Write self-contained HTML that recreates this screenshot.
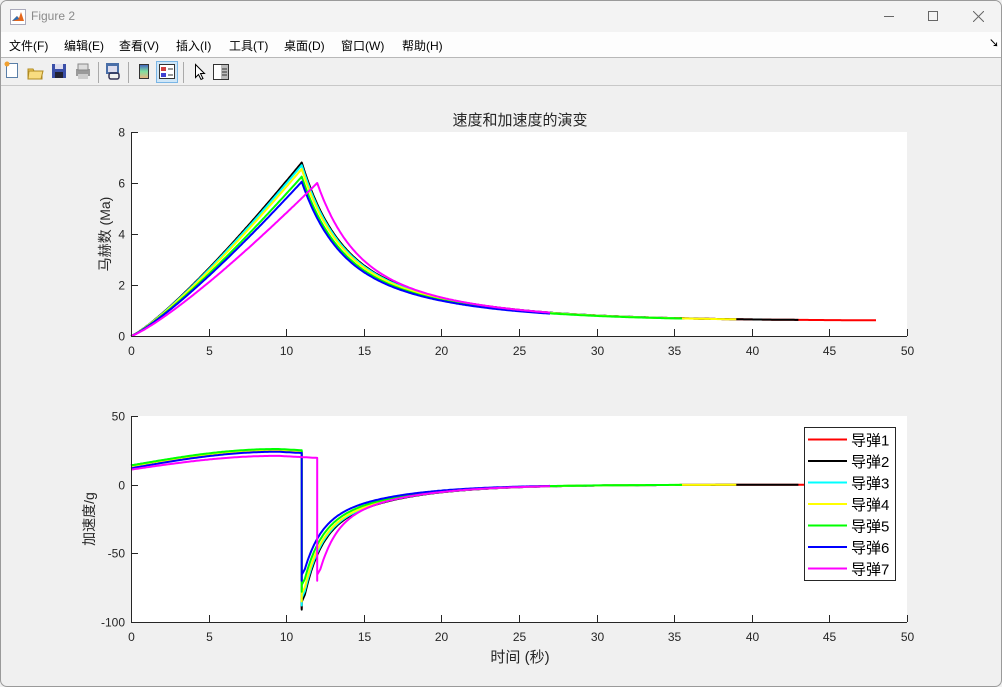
<!DOCTYPE html>
<html><head><meta charset="utf-8"><style>
*{margin:0;padding:0;box-sizing:border-box}
body{width:1002px;height:687px;overflow:hidden;background:#f0f0f0;font-family:"Liberation Sans","Noto Sans CJK SC",sans-serif;position:relative}
.win{position:absolute;left:0;top:0;width:1002px;height:687px;border:1px solid #9a9a9a;border-radius:7px;overflow:hidden;background:#f0f0f0}
.title{position:absolute;left:0;top:0;width:100%;height:31px;background:#f3f3f3;font-size:12px;color:#8a8a8a}
.menu{position:absolute;left:0;top:31px;width:100%;height:26px;background:#fdfdfd;border-bottom:1px solid #b8b8b8;font-size:12px;color:#000}
.menu span{position:absolute;top:5px;font-family:"Liberation Sans","Noto Sans CJK SC",sans-serif}
.tool{position:absolute;left:0;top:58px;width:100%;height:27px;background:#f0f0f0;border-bottom:1px solid #c8c8c8}
svg text{font-family:"Liberation Sans","Noto Sans CJK SC",sans-serif}
</style></head><body><div class="win">
<div class="title">
<svg style="position:absolute;left:9px;top:8px" width="16" height="16" viewBox="0 0 16 16"><rect x="0.5" y="0.5" width="15" height="15" fill="#fff" stroke="#aab"/><path d="M2 12 L7 7 L9 9 L11 3 L14 12 Z" fill="#e4661c"/><path d="M2 12 L7 7 L9 10 Z" fill="#2d6fb5"/></svg>
<span style="position:absolute;left:30px;top:8px">Figure 2</span>
<div style="position:absolute;left:883px;top:15px;width:10px;height:1px;background:#666"></div>
<div style="position:absolute;left:927px;top:10px;width:10px;height:10px;border:1px solid #666"></div>
<svg style="position:absolute;left:972px;top:10px" width="11" height="11"><path d="M0 0L11 11M11 0L0 11" stroke="#666" stroke-width="1"/></svg>
</div>
<div class="menu">
<span style="left:8px">文件(F)</span><span style="left:63px">编辑(E)</span><span style="left:118px">查看(V)</span><span style="left:175px">插入(I)</span><span style="left:228px">工具(T)</span><span style="left:283px">桌面(D)</span><span style="left:340px">窗口(W)</span><span style="left:401px">帮助(H)</span>
<span style="left:988px;top:3px;font-size:10px;font-weight:bold">↘</span>
</div>
<div class="tool">
<svg width="240" height="27">
<rect x="5.5" y="4.5" width="11" height="14" fill="#fff" stroke="#5a7fa8"/><circle cx="6" cy="5" r="2.5" fill="#f0a030"/>
<path d="M27 10h5l1 2h8v8H27z" fill="#f4cf60" stroke="#b08a20"/><path d="M28 12h14l-2 8H27z" fill="#f8dc80" stroke="#b08a20"/>
<rect x="51" y="5" width="14" height="14" fill="#3a4fa8"/><rect x="54" y="5" width="8" height="5" fill="#dde"/><rect x="54" y="13" width="8" height="6" fill="#223"/>
<rect x="75" y="10" width="14" height="7" fill="#9a9a9a"/><rect x="77" y="5" width="10" height="6" fill="#ddd" stroke="#888"/><rect x="77" y="15" width="10" height="5" fill="#ccc"/>
<line x1="97.5" y1="3" x2="97.5" y2="24" stroke="#aaa"/>
<rect x="105" y="4" width="13" height="11" fill="#4a6fa8"/><rect x="107" y="7" width="9" height="6" fill="#dde"/><rect x="108" y="14" width="10" height="6" rx="2" fill="none" stroke="#335" stroke-width="1.5"/>
<line x1="127.5" y1="3" x2="127.5" y2="24" stroke="#aaa"/>
<defs><linearGradient id="g" x1="0" y1="0" x2="0" y2="1"><stop offset="0" stop-color="#4060c0"/><stop offset=".5" stop-color="#80e0a0"/><stop offset="1" stop-color="#f0b080"/></linearGradient></defs>
<rect x="138.5" y="5.5" width="9" height="14" fill="url(#g)" stroke="#333"/>
<rect x="155.5" y="2.5" width="21" height="21" fill="#cfe6f7" stroke="#7ab6e6"/><rect x="158.5" y="5.5" width="15" height="14" fill="#fff" stroke="#333"/><rect x="160" y="8" width="5" height="4" fill="#d04040"/><rect x="160" y="14" width="5" height="4" fill="#4040d0"/><line x1="167" y1="10" x2="172" y2="10" stroke="#333"/><line x1="167" y1="16" x2="172" y2="16" stroke="#333"/>
<line x1="182.5" y1="3" x2="182.5" y2="24" stroke="#aaa"/>
<path d="M194.5 5.5v13l3-3 2.5 5 2-1-2.5-5h4z" fill="#fff" stroke="#000"/>
<rect x="212.5" y="5.5" width="15" height="15" fill="#fff" stroke="#333"/><rect x="220" y="6" width="7" height="14" fill="#bbb"/><line x1="221" y1="10" x2="226" y2="10" stroke="#333"/><line x1="221" y1="13" x2="226" y2="13" stroke="#333"/><line x1="221" y1="16" x2="226" y2="16" stroke="#333"/>
</svg>
</div>
<svg id="plot" style="position:absolute;left:0;top:0" width="1002" height="687">
<rect x="130" y="131" width="776" height="204" fill="#fff"/>
<rect x="130" y="415" width="776" height="206" fill="#fff"/>
<g id="curves" fill="none" stroke-width="2" stroke-linejoin="round"></g>
<g stroke="#262626" stroke-width="1" fill="none">
<path d="M130.5 131V335.5H906"/>
<path d="M130.5 415V621.5H906"/>
</g>
<g id="ticks" stroke="#262626" stroke-width="1"></g>
<g id="labels" font-size="12" fill="#262626"></g>
<text x="519" y="124" font-size="15" fill="#262626" text-anchor="middle">速度和加速度的演变</text>
<text transform="translate(109,233) rotate(-90)" font-size="14" fill="#262626" text-anchor="middle">马赫数 (Ma)</text>
<text transform="translate(93,518) rotate(-90)" font-size="14" fill="#262626" text-anchor="middle">加速度/g</text>
<text x="519" y="661" font-size="15" fill="#262626" text-anchor="middle">时间 (秒)</text>
<g id="legend"><rect x="803.5" y="426.5" width="91" height="153" fill="#fff" stroke="#262626"/></g>
</svg>
</div>
<script>
var NS="http://www.w3.org/2000/svg";
function el(p,t,a,txt){var e=document.createElementNS(NS,t);for(var k in a)e.setAttribute(k,a[k]);if(txt!=null)e.textContent=txt;p.appendChild(e);return e}
var tk=document.getElementById('ticks'),lb=document.getElementById('labels'),cv=document.getElementById('curves'),lg=document.getElementById('legend');
function X(t){return 130+15.52*t}
for(var i=0;i<=10;i++){var x=Math.round(X(i*5))+0.5;
el(tk,'line',{x1:x,x2:x,y1:335,y2:328});el(tk,'line',{x1:x,x2:x,y1:621,y2:614});
el(lb,'text',{x:x,y:354,'text-anchor':'middle'},i*5);el(lb,'text',{x:x,y:640,'text-anchor':'middle'},i*5);}
for(var i=0;i<=4;i++){var y=Math.round(335-25.5*i*2)+0.5;el(tk,'line',{x1:130,x2:137,y1:y,y2:y});el(lb,'text',{x:124,y:y+4,'text-anchor':'end'},i*2);}
[[50,415],[0,483.7],[-50,552.3],[-100,621]].forEach(function(v){var y=Math.round(v[1])+0.5;el(tk,'line',{x1:130,x2:137,y1:y,y2:y});el(lb,'text',{x:124,y:y+4,'text-anchor':'end'},v[0]);});
function YM(m){return 335-25.5*m}
function YA(a){return 483.7-1.373*a}
function mdec(dt,P){return 0.6+(P-0.6)*(0.5*Math.exp(-dt/2.0)+0.5*Math.exp(-dt/7));}
function adec(dt,A){return A*(0.55*Math.exp(-dt/1.0)+0.45*Math.exp(-dt/4.5));}
var S=[['#ff0000',6.8,11,48,14,25,-90],['#000000',6.8,11,43,14,25,-91],['#00ffff',6.7,11,35,14,25.5,-88],['#ffff00',6.55,11,39,13.5,25,-85],['#00ff00',6.25,11,35.5,14,26,-78],['#0000ff',6.05,11,27,12,24,-70],['#ff00ff',6.0,12,27,11,21,-70]];
[0,1,2,3,4,5,6].forEach(function(i){var s=S[i],c=s[0],P=s[1],tb=s[2],te=s[3];
var d='',d2='';
for(var t=0;t<=te+1e-9;t+=0.1){var m,a;
if(t<=tb+1e-9){m=P*Math.pow(t/tb,1.2);}else{m=mdec(t-tb,P);}
if(t<=tb+1e-9){var u=Math.min(t/9.5,1);a=s[4]+(s[5]-s[4])*Math.sin(Math.PI/2*u);if(t>9.5)a=s[5]-(t-9.5)*0.6;}else{a=adec(t-tb,s[6]);}
if(t>tb&&d2.indexOf('V')<0){d2+='L'+X(tb).toFixed(1)+' '+YA(s[6]).toFixed(1);d2+='V';}
d+=(d?'L':'M')+X(t).toFixed(1)+' '+YM(m).toFixed(1);
d2+=(d2?(d2.slice(-1)=='V'?'':'L'):'M')+(d2.slice(-1)=='V'?'':X(t).toFixed(1)+' ')+YA(a).toFixed(1);
}
el(cv,'path',{d:d,stroke:c});el(cv,'path',{d:d2,stroke:c});});
S.forEach(function(s,i){var y=438.5+21.5*i;el(lg,'line',{x1:807,x2:846,y1:y,y2:y,stroke:s[0],'stroke-width':2});el(lg,'text',{x:850,y:y+6,'font-size':15,fill:'#000'},'导弹'+(i+1));});
</script>
</body></html>
